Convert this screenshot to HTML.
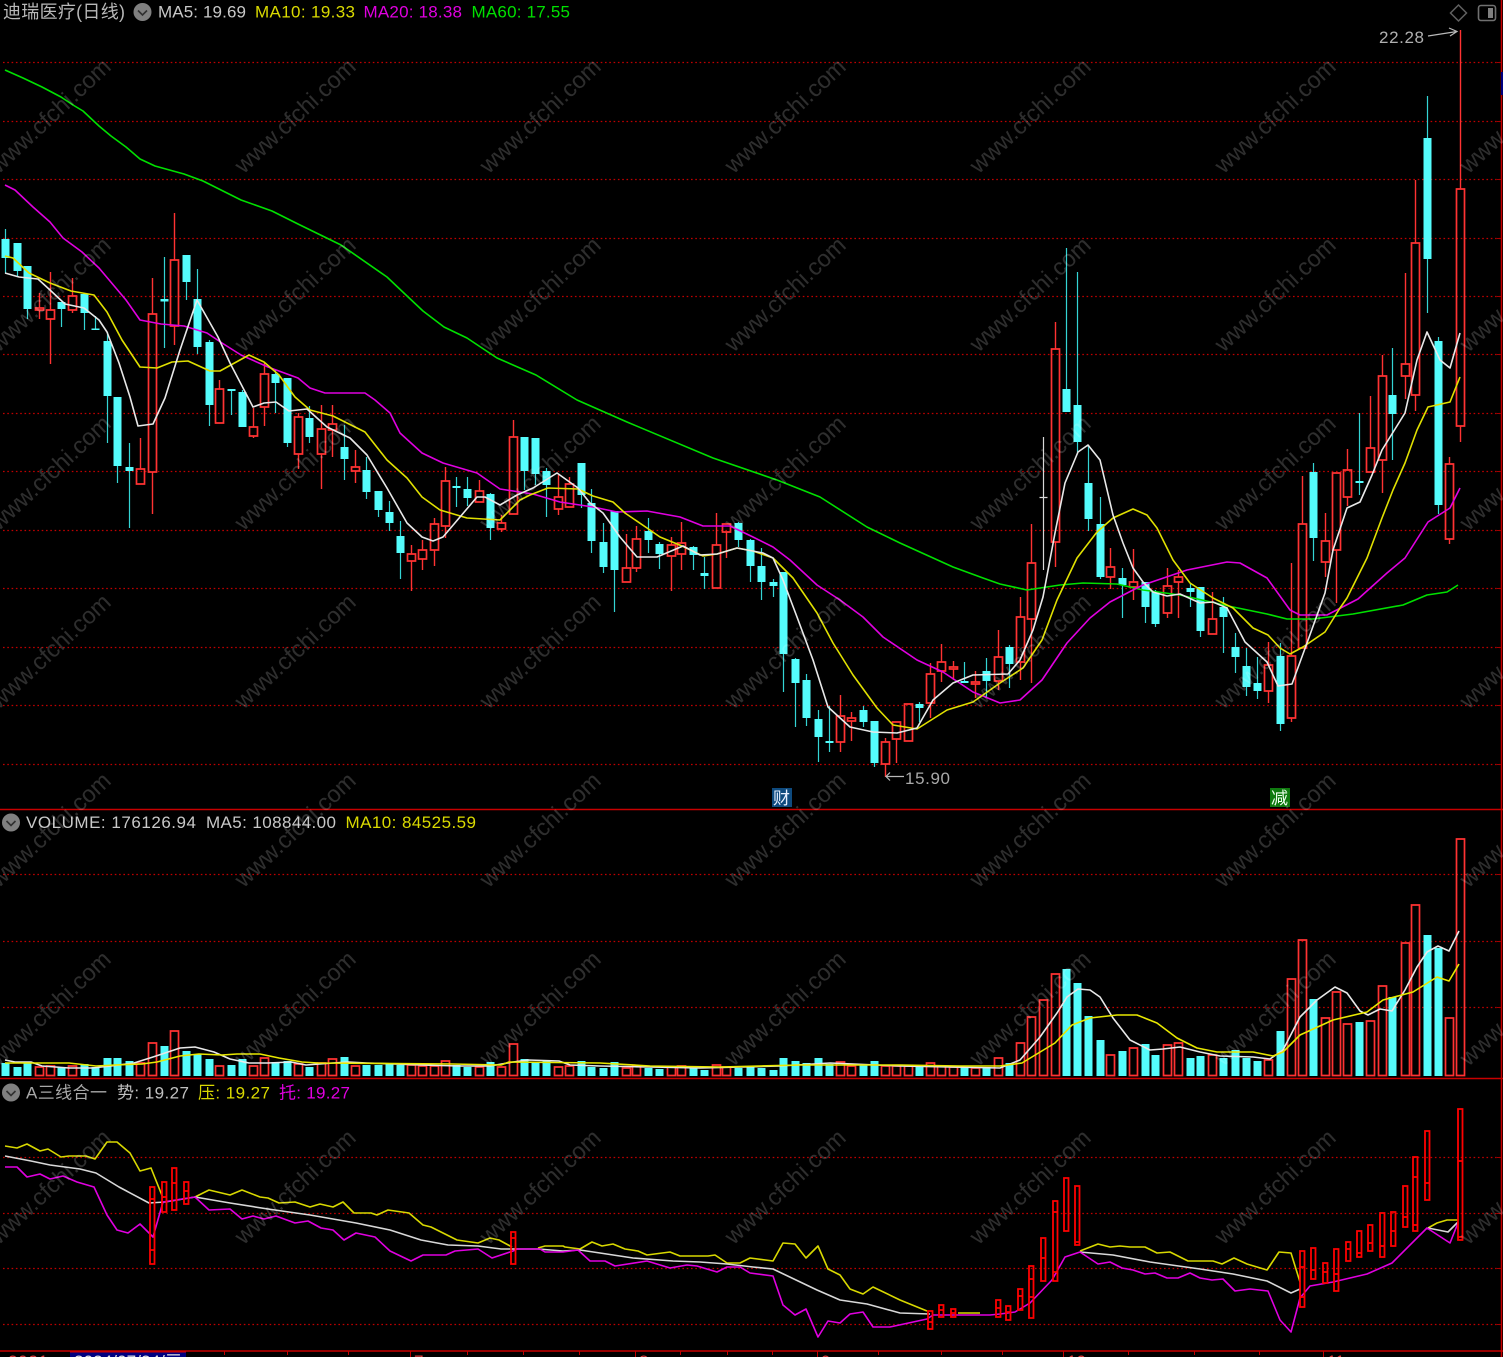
<!DOCTYPE html>
<html><head><meta charset="utf-8"><title>迪瑞医疗</title>
<style>
html,body{margin:0;padding:0;background:#000;width:1503px;height:1357px;overflow:hidden}
svg{display:block;position:absolute;left:0;top:0;filter:blur(.2px)}
text{font-family:"Liberation Sans","Noto Sans CJK SC",sans-serif}
</style></head><body>
<svg xmlns="http://www.w3.org/2000/svg" width="1503" height="1357" viewBox="0 0 1503 1357">
<rect width="1503" height="1357" fill="#000"/>
<!-- grid -->
<path fill="none" stroke="#c00000" stroke-width="1.2" stroke-dasharray="1.6 2.7" d="M3 62.5H1500M3 121.5H1500M3 179.5H1500M3 238.5H1500M3 296.5H1500M3 354.5H1500M3 413.5H1500M3 471.5H1500M3 530.5H1500M3 588.5H1500M3 647.5H1500M3 705.5H1500M3 764.5H1500M3 874.5H1500M3 941.5H1500M3 1007.5H1500M3 1157.5H1500M3 1213.5H1500M3 1268.5H1500M3 1324.5H1500"/>
<!-- frame -->
<path fill="none" stroke="#c80000" stroke-width="1.5" d="M0 809.5H1503M0 1078.5H1503M0 1351H1503M1501.5 0V1357"/>
<path fill="none" stroke="#a00000" stroke-width="1" d="M1497 62.5h4M1497 121.5h4M1497 179.5h4M1497 238.5h4M1497 296.5h4M1497 354.5h4M1497 413.5h4M1497 471.5h4M1497 530.5h4M1497 588.5h4M1497 647.5h4M1497 705.5h4M1497 764.5h4M1497 874.5h4M1497 941.5h4M1497 1007.5h4M1497 1157.5h4M1497 1213.5h4M1497 1268.5h4M1497 1324.5h4"/>
<path fill="none" stroke="#c00000" stroke-width="1" d="M224.5 1351v4M287.5 1351v4M348.5 1351v4M410.5 1351v6M467.5 1351v4M523.5 1351v4M579.5 1351v4M635.5 1351v6M680.5 1351v4M727.5 1351v4M772.5 1351v4M817.5 1351v6M878.5 1351v4M941.5 1351v4M1002.5 1351v4M1063.5 1351v6M1128.5 1351v4M1194.5 1351v4M1259.5 1351v4M1323.5 1351v6"/>
<rect x="1501" y="72" width="2" height="23" fill="#000080"/>
<!-- axis -->
<rect x="70" y="1352" width="116" height="6" fill="#000080"/>
<rect x="70" y="1351.5" width="116" height="1" fill="#d00000"/>
<text x="74" y="1367" font-size="17" fill="#e0e0e0" textLength="108">2024/07/24/三</text>
<text x="8" y="1367" font-size="17" fill="#e04040" textLength="40">2021</text>
<text x="414" y="1367" font-size="17" fill="#e04040">7</text><text x="639" y="1367" font-size="17" fill="#e04040">8</text><text x="821" y="1367" font-size="17" fill="#e04040">9</text><text x="1067" y="1367" font-size="17" fill="#e04040">10</text><text x="1327" y="1367" font-size="17" fill="#e04040">11</text>

<!-- candles cyan wicks -->
<path fill="none" stroke="#34d4d4" stroke-width="1.2" d="M5.5 229V273M17.5 243V277M27.5 266V319M61.5 302V327M84.5 293V330M95.5 316V330M107.5 332V443M117.5 397V483M129.5 443V528M164.5 257V348M186.5 255V300M197.5 269V354M209.5 340V426M231.5 389V415M242.5 390V427M275.5 370V413M287.5 378V447M309.5 406V443M344.5 425V480M366.5 457V499M378.5 491V517M389.5 501V531M400.5 521V579M456.5 477V507M467.5 477V506M490.5 493V540M524.5 437V490M535.5 438V485M546.5 468V517M581.5 463V508M591.5 489V553M603.5 523V573M614.5 511V612M648.5 518V553M659.5 542V569M693.5 546V570M704.5 557V589M738.5 522V547M750.5 539V582M761.5 548V600M773.5 579V597M783.5 572V692M795.5 658V727M806.5 674V726M818.5 710V762M829.5 706V752M863.5 706V727M874.5 721V767M919.5 702V722M964.5 662V683M986.5 658V698M1009.5 645V688M1066.5 248V412M1077.5 272V453M1088.5 445V531M1100.5 497V579M1122.5 568V618M1145.5 582V623M1155.5 590V627M1190.5 583V607M1200.5 587V637M1223.5 597V653M1235.5 633V673M1246.5 648V696M1257.5 657V699M1280.5 643V731M1313.5 463V561M1359.5 413V495M1392.5 348V460M1427.5 96V313M1438.5 337V514"/>
<!-- candles cyan bodies -->
<path fill="none" stroke="#54fcfc" stroke-width="8" d="M5.5 239V258M17.5 243V271M27.5 266V309M61.5 302V309M84.5 294V313M107.5 341V396M117.5 397V466M209.5 342V405M242.5 392V427M275.5 374V383M287.5 378V443M309.5 418V437M344.5 447V459M366.5 470V492M378.5 491V510M389.5 512V523M400.5 536V553M467.5 489V498M490.5 494V528M524.5 437V471M535.5 438V474M546.5 471V485M186.5 255V282M197.5 299V347M581.5 463V495M591.5 503V541M603.5 542V567M614.5 511V570M648.5 531V540M659.5 544V554M693.5 547V555M738.5 523V540M750.5 540V566M761.5 566V582M773.5 582V586M783.5 572V654M795.5 659V683M806.5 680V718M818.5 719V737M863.5 710V722M874.5 721V763M919.5 704V708M986.5 671V681M1009.5 647V664M1066.5 389V412M1077.5 405V442M1088.5 483V519M1100.5 524V577M1122.5 578V585M1145.5 582V607M1155.5 592V624M1190.5 588V592M1200.5 587V631M1223.5 607V617M1235.5 647V657M1246.5 666V687M1257.5 683V691M1280.5 656V724M1313.5 472V538M1392.5 395V414M1427.5 138V259M1438.5 341V505"/>
<path fill="none" stroke="#54fcfc" stroke-width="8" d="M95.5 328.5V330M129.5 467V471M164.5 299V301.5M231.5 389V391M456.5 486V488M704.5 573V576M829.5 741V743M964.5 681V683M1359.5 481V483"/>
<!-- red wicks -->
<path fill="none" stroke="#ff3232" stroke-width="1.4" d="M39.5 293V308M39.5 310V319M50.5 272V310M50.5 319V364M72.5 278V296M72.5 310V313M140.5 438V469M152.5 278V314M152.5 472V514M174.5 213V260M174.5 326V345M219.5 380V389M253.5 408V427M253.5 436V438M264.5 363V374M264.5 407V426M298.5 413V417M298.5 454V469M321.5 405V429M321.5 454V489M332.5 405V424M332.5 430V457M355.5 450V467M355.5 471V483M411.5 545V554M411.5 561V591M422.5 540V550M422.5 559V570M434.5 518V524M434.5 550V566M445.5 467V481M445.5 526V538M479.5 480V491M501.5 515V523M501.5 529V532M513.5 420V437M558.5 475V497M558.5 509V515M569.5 477V484M636.5 526V539M636.5 568V572M626.5 534V568M671.5 537V545M671.5 556V591M681.5 522V543M681.5 554V570M716.5 513V545M726.5 532V558M840.5 695V716M840.5 742V752M851.5 712V718M851.5 721V741M885.5 738V742M885.5 764V777M896.5 739V763M930.5 663V674M930.5 703V718M941.5 644V662M941.5 671V682M953.5 661V667M953.5 669V680M975.5 671V682M975.5 684V698M998.5 630V657M998.5 681V690M1020.5 597V617M1020.5 662V680M1031.5 524V563M1031.5 619V683M1055.5 322V349M1055.5 542V567M1110.5 548V567M1110.5 577V589M1133.5 549V582M1133.5 587V600M1167.5 568V586M1167.5 613V618M1178.5 570V577M1178.5 582V618M1212.5 592V619M1268.5 642V665M1268.5 691V703M1291.5 563V656M1291.5 718V722M1302.5 476V524M1325.5 513V541M1325.5 562V577M1336.5 550V603M1347.5 449V470M1347.5 497V506M1370.5 396V448M1382.5 355V376M1382.5 460V493M1405.5 273V364M1405.5 376V399M1415.5 180V243M1415.5 395V411M1449.5 457V464M1449.5 539V544M1460.5 30V189M1460.5 426V442"/>
<!-- red bodies -->
<path fill="none" stroke="#ff3232" stroke-width="1.7" d="M35.5 308h8V310h-8zM46.5 310h8V319h-8zM68.5 296h8V310h-8zM136.5 469h8V484h-8zM148.5 314h8V472h-8zM170.5 260h8V326h-8zM215.5 389h8V423h-8zM249.5 427h8V436h-8zM260.5 374h8V407h-8zM294.5 417h8V454h-8zM317.5 429h8V454h-8zM328.5 424h8V430h-8zM351.5 467h8V471h-8zM407.5 554h8V561h-8zM418.5 550h8V559h-8zM430.5 524h8V550h-8zM441.5 481h8V526h-8zM475.5 491h8V502h-8zM497.5 523h8V529h-8zM509.5 437h8V514h-8zM554.5 497h8V509h-8zM565.5 484h8V507h-8zM622.5 568h8V582h-8zM632.5 539h8V568h-8zM667.5 545h8V556h-8zM677.5 543h8V554h-8zM712.5 545h8V588h-8zM722.5 524h8V532h-8zM836.5 716h8V742h-8zM847.5 718h8V721h-8zM881.5 742h8V764h-8zM892.5 722h8V739h-8zM904.5 704h8V741h-8zM926.5 674h8V703h-8zM937.5 662h8V671h-8zM949.5 667h8V669h-8zM971.5 682h8V684h-8zM994.5 657h8V681h-8zM1016.5 617h8V662h-8zM1027.5 563h8V619h-8zM1051.5 349h8V542h-8zM1106.5 567h8V577h-8zM1129.5 582h8V587h-8zM1163.5 586h8V613h-8zM1174.5 577h8V582h-8zM1208.5 619h8V634h-8zM1264.5 665h8V691h-8zM1287.5 656h8V718h-8zM1298.5 524h8V648h-8zM1321.5 541h8V562h-8zM1332.5 473h8V550h-8zM1343.5 470h8V497h-8zM1366.5 448h8V472h-8zM1378.5 376h8V460h-8zM1401.5 364h8V376h-8zM1411.5 243h8V395h-8zM1445.5 464h8V539h-8zM1456.5 189h8V426h-8z"/>
<!-- gray doji -->
<path fill="none" stroke="#d8d8d8" stroke-width="1.2" d="M1043.5 437V570M1039.5 497.5h8"/>

<!-- MA lines -->
<g fill="none" stroke-width="1.6" stroke-linejoin="round">
<polyline stroke="#00e000" points="5,70 23,78 42,87 61,97 73,105 83,111 99,126 111,136 126,147 140,159 155,166 184,174 203,181 241,200 272,211 298,224 341,245 387,277 406,295 423,311 444,327 467,338 497,358 536,375 577,400 627,422 713,458 777,480 820,497 867,527 900,543 953,567 983,578 1000,584 1027,590 1060,585 1083,583 1117,584 1143,590 1180,595 1233,607 1267,614 1287,619 1313,619 1353,614 1403,605 1427,595 1447,592 1458,585"/>
<polyline stroke="#e000e0" points="5,185 15,190 33,207 50,222 63,238 82,252 99,268 126,300 140,320 161,324 184,326 207,333 222,343 241,355 268,367 298,378 310,388 325,393 348,393 365,393 375,400 390,413 400,433 422,453 443,463 477,473 500,489 533,494 560,502 593,507 617,512 647,511 680,517 703,526 730,526 753,537 773,547 790,560 817,585 840,600 863,617 883,637 917,660 943,672 973,692 1000,703 1020,700 1042,680 1067,643 1090,618 1110,602 1133,590 1143,585 1187,570 1227,562 1240,563 1267,578 1290,610 1300,615 1327,615 1358,599 1387,573 1405,558 1428,522 1450,508 1460,488"/>
<polyline stroke="#e0e000" points="5,256 13,258 29,273 50,283 71,291 94,295 107,312 122,340 140,367 157,368 172,362 188,361 210,371 220,371 249,355 264,362 279,375 295,397 310,410 333,416 365,432 387,460 407,478 422,497 440,510 467,518 500,520 520,500 530,495 548,488 578,489 593,496 613,502 625,513 647,528 660,537 682,546 703,556 717,554 737,548 753,551 773,558 793,578 817,613 833,643 853,675 877,708 893,725 917,729 947,710 973,702 1000,683 1023,668 1042,640 1057,600 1077,558 1097,532 1113,518 1133,509 1147,515 1157,528 1173,560 1190,583 1213,598 1233,608 1253,628 1268,635 1280,648 1290,654 1303,647 1325,632 1340,608 1347,598 1367,558 1382,518 1393,490 1405,463 1417,430 1428,407 1450,402 1460,377"/>
<polyline stroke="#e8e8e8" points="5,273 19,277 38,279 50,290 65,304 84,308 99,320 107,332 119,363 130,397 138,426 153,424 165,398 180,350 197,300 218,337 230,363 253,407 264,403 276,402 289,411 307,409 327,427 350,438 367,455 387,488 407,523 422,537 433,541 443,537 477,497 485,497 500,505 517,495 533,488 557,473 578,488 590,503 603,513 620,537 637,557 657,557 683,546 700,555 717,554 737,548 763,553 773,558 783,580 797,617 813,660 828,707 850,727 873,732 897,733 917,728 933,700 953,683 973,675 1008,674 1020,660 1033,630 1043,597 1055,533 1065,483 1078,452 1088,445 1100,460 1113,515 1123,543 1133,568 1143,582 1153,592 1167,596 1180,594 1200,603 1213,602 1227,608 1245,642 1267,662 1278,686 1292,684 1307,643 1325,593 1333,550 1347,508 1360,502 1372,475 1382,450 1405,413 1417,360 1427,332 1440,360 1450,368 1460,333"/>
</g>

<!-- badges & labels -->
<rect x="772" y="788" width="20" height="19" fill="#0e4a7e"/>
<text x="773" y="804" font-size="17" fill="#e8f0ff">财</text>
<rect x="1270" y="788" width="20" height="19" fill="#0f7a0f"/>
<text x="1271" y="804" font-size="17" fill="#f0fff0">减</text>
<text x="905" y="784" font-size="17" fill="#a8a8a8" textLength="45">15.90</text>
<path fill="none" stroke="#b8b8b8" stroke-width="1.2" d="M904 776.5H886M890 772.5l-4 4l4 4"/>
<text x="1379" y="43" font-size="17" fill="#b0b0b0" textLength="45">22.28</text>
<path fill="none" stroke="#b8b8b8" stroke-width="1.2" d="M1428 36L1457 31.5M1449 28l8 3.5l-7 4.5"/>

<!-- top right icons -->
<path fill="none" stroke="#606060" stroke-width="1.5" d="M1458.5 5l8 8l-8 8l-8-8z"/>
<rect x="1478.5" y="5.5" width="17" height="15" rx="2.5" fill="none" stroke="#707070" stroke-width="1.6"/>
<rect x="1488" y="8" width="5" height="10" fill="#808080"/>

<!-- volume bars -->
<path fill="none" stroke="#54fcfc" stroke-width="8" d="M5.5 1063V1076M17.5 1067V1076M27.5 1062V1076M61.5 1067V1076M84.5 1064V1076M95.5 1067V1076M107.5 1058V1076M117.5 1058V1076M129.5 1061V1076M164.5 1046V1076M186.5 1051V1076M197.5 1054V1076M209.5 1059V1076M231.5 1065V1076M242.5 1059V1076M275.5 1062V1076M287.5 1061V1076M309.5 1067V1076M344.5 1057V1076M366.5 1065V1076M378.5 1065V1076M389.5 1063V1076M400.5 1065V1076M456.5 1065V1076M467.5 1067V1076M490.5 1062V1076M524.5 1059V1076M535.5 1063V1076M546.5 1060V1076M581.5 1061V1076M591.5 1067V1076M603.5 1068V1076M614.5 1062V1076M648.5 1068V1076M659.5 1069V1076M693.5 1068V1076M704.5 1070V1076M738.5 1068V1076M750.5 1066V1076M761.5 1068V1076M773.5 1070V1076M783.5 1058V1076M795.5 1061V1076M806.5 1063V1076M818.5 1058V1076M829.5 1064V1076M863.5 1065V1076M874.5 1061V1076M919.5 1066V1076M964.5 1068V1076M986.5 1067V1076M1009.5 1063V1076M1066.5 969V1076M1077.5 983V1076M1088.5 1016V1076M1100.5 1040V1076M1122.5 1051V1076M1145.5 1044V1076M1155.5 1055V1076M1190.5 1058V1076M1200.5 1056V1076M1223.5 1058V1076M1235.5 1050V1076M1246.5 1058V1076M1257.5 1061V1076M1280.5 1031V1076M1313.5 999V1076M1359.5 1022V1076M1392.5 997V1076M1427.5 935V1076M1438.5 948V1076"/>
<path fill="none" stroke="#ff3232" stroke-width="1.7" d="M35.5 1067h8V1075.5h-8zM46.5 1066h8V1075.5h-8zM68.5 1066h8V1075.5h-8zM136.5 1063h8V1075.5h-8zM148.5 1043h8V1075.5h-8zM170.5 1031h8V1075.5h-8zM215.5 1066h8V1075.5h-8zM249.5 1066h8V1075.5h-8zM260.5 1058h8V1075.5h-8zM294.5 1064h8V1075.5h-8zM317.5 1063h8V1075.5h-8zM328.5 1059h8V1075.5h-8zM351.5 1066h8V1075.5h-8zM407.5 1065h8V1075.5h-8zM418.5 1066h8V1075.5h-8zM430.5 1066h8V1075.5h-8zM441.5 1061h8V1075.5h-8zM475.5 1067h8V1075.5h-8zM497.5 1067h8V1075.5h-8zM509.5 1044h8V1075.5h-8zM554.5 1067h8V1075.5h-8zM565.5 1066h8V1075.5h-8zM622.5 1068h8V1075.5h-8zM632.5 1066h8V1075.5h-8zM667.5 1067h8V1075.5h-8zM677.5 1066h8V1075.5h-8zM712.5 1065h8V1075.5h-8zM722.5 1067h8V1075.5h-8zM836.5 1062h8V1075.5h-8zM847.5 1066h8V1075.5h-8zM881.5 1066h8V1075.5h-8zM892.5 1066h8V1075.5h-8zM904.5 1066h8V1075.5h-8zM926.5 1063h8V1075.5h-8zM937.5 1066h8V1075.5h-8zM949.5 1067h8V1075.5h-8zM971.5 1068h8V1075.5h-8zM994.5 1058h8V1075.5h-8zM1016.5 1043h8V1075.5h-8zM1027.5 1017h8V1075.5h-8zM1039.5 1000h8V1075.5h-8zM1051.5 974h8V1075.5h-8zM1106.5 1055h8V1075.5h-8zM1129.5 1048h8V1075.5h-8zM1163.5 1045h8V1075.5h-8zM1174.5 1043h8V1075.5h-8zM1208.5 1055h8V1075.5h-8zM1264.5 1060h8V1075.5h-8zM1287.5 979h8V1075.5h-8zM1298.5 940h8V1075.5h-8zM1321.5 1018h8V1075.5h-8zM1332.5 992h8V1075.5h-8zM1343.5 1024h8V1075.5h-8zM1366.5 1021h8V1075.5h-8zM1378.5 986h8V1075.5h-8zM1401.5 943h8V1075.5h-8zM1411.5 905h8V1075.5h-8zM1445.5 1018h8V1075.5h-8zM1456.5 839h8V1075.5h-8z"/>
<g fill="none" stroke-width="1.6" stroke-linejoin="round">
<polyline stroke="#e8e8e8" points="5,1060 15,1062 31,1062 42,1066 69,1068 92,1068 111,1066 134,1063 153,1057 168,1052 180,1048 195,1047 214,1052 230,1059 249,1063 268,1063 291,1062 306,1065 333,1063 348,1062 367,1063 421,1065 459,1066 490,1066 513,1062 528,1060 559,1061 570,1065 600,1066 650,1067 700,1068 780,1066 830,1063 900,1066 950,1067 1000,1068 1020,1060 1040,1037 1057,1013 1067,997 1078,989 1090,990 1100,997 1113,1018 1130,1040 1150,1050 1163,1049 1180,1047 1200,1052 1220,1056 1253,1057 1270,1059 1283,1050 1300,1017 1317,1000 1335,987 1347,993 1360,1011 1368,1015 1380,1009 1392,1011 1405,990 1417,967 1427,952 1438,946 1449,951 1459,931"/>
<polyline stroke="#e8e800" points="5,1063 69,1063 96,1066 115,1065 142,1064 157,1062 180,1056 199,1054 222,1055 237,1054 260,1054 279,1058 302,1062 318,1063 452,1064 501,1065 509,1062 600,1063 650,1066 720,1067 800,1065 900,1065 960,1066 1000,1066 1022,1063 1055,1043 1072,1025 1090,1018 1117,1015 1137,1015 1157,1023 1177,1038 1197,1048 1217,1052 1253,1052 1273,1056 1283,1052 1300,1035 1333,1020 1367,1012 1383,1000 1413,992 1437,977 1449,981 1459,964"/>
</g>

<!-- indicator -->
<g fill="none" stroke-width="1.6" stroke-linejoin="round">
<polyline stroke="#d8d800" points="5,1146 17,1148 27,1144 40,1151 48,1149 61,1157 69,1156 86,1156 95,1159 107,1142 117,1142 130,1153 140,1171 151,1168 163,1198"/>
<polyline stroke="#d8d800" points="195,1197 209,1190 230,1195 242,1190 260,1197 268,1198 279,1203 295,1202 310,1207 320,1204 333,1207 343,1202 354,1213 371,1213 377,1215 388,1210 409,1213 423,1225 431,1227 457,1240 478,1243 490,1238 499,1240 512,1247"/>
<polyline stroke="#d8d800" points="538,1248 545,1246 563,1246 565,1247 580,1249 592,1242 602,1246 613,1244 625,1249 638,1251 647,1255 670,1252 680,1256 708,1256 715,1255 727,1263 740,1263 750,1258 773,1261 783,1243 795,1244 806,1258 818,1246 828,1269 840,1275 850,1289 863,1294 873,1287 900,1300 927,1311"/>
<polyline stroke="#d8d800" points="958,1313 980,1313"/>
<polyline stroke="#d8d800" points="1080,1251 1098,1244 1110,1247 1120,1246 1130,1247 1145,1247 1157,1253 1170,1252 1188,1261 1213,1261 1222,1264 1234,1258 1247,1264 1267,1270 1279,1252 1291,1253 1300,1282"/>
<polyline stroke="#d8d800" points="1428,1228 1437,1223 1447,1220 1458,1220"/>
<polyline stroke="#d8d8d8" points="5,1156 31,1161 50,1165 80,1169 96,1173 119,1187 149,1203 165,1202 195,1197 230,1203 268,1209 310,1215 356,1223 390,1230 421,1240 448,1245 478,1246 501,1249 517,1249 538,1249 563,1251 580,1250 600,1253 633,1258 673,1261 700,1262 727,1264 753,1267 773,1269 817,1290 840,1300 867,1304 900,1313 930,1314"/>
<polyline stroke="#d8d8d8" points="1080,1252 1113,1255 1150,1262 1200,1269 1233,1274 1267,1281 1291,1293 1300,1289"/>
<polyline stroke="#d8d8d8" points="1428,1228 1448,1232 1458,1222"/>
<polyline stroke="#e000e0" points="5,1167 17,1167 27,1177 40,1174 50,1179 63,1176 77,1182 94,1187 107,1215 117,1230 128,1233 140,1224 153,1237 163,1202 195,1197 209,1210 230,1209 242,1219 253,1216 264,1219 276,1216 295,1223 308,1221 321,1228 333,1230 344,1240 356,1233 375,1237 390,1251 411,1261 423,1255 446,1255 455,1251 478,1249 492,1258 513,1251 517,1249 540,1249 545,1252 563,1252 578,1250 590,1261 605,1261 615,1266 647,1261 670,1268 687,1265 697,1266 717,1272 727,1267 740,1267 750,1273 773,1276 783,1305 795,1315 806,1309 818,1337 828,1321 840,1323 850,1314 863,1312 873,1327 890,1327 927,1319 933,1315 960,1315 990,1315 1000,1314 1015,1312 1030,1303 1052,1280 1065,1257 1080,1252 1098,1264 1110,1262 1122,1268 1133,1270 1145,1274 1155,1273 1167,1278 1178,1278 1190,1273 1200,1278 1212,1280 1223,1279 1235,1291 1250,1289 1268,1291 1280,1320 1291,1332 1300,1298 1310,1286 1333,1282 1367,1274 1392,1263 1427,1228 1450,1243 1458,1223"/>
</g>
<path fill="none" stroke="#ff0000" stroke-width="1.8" d="M150 1187h4.5V1264h-4.5zM150 1199h4.5M150 1250h4.5M162 1182h4.5V1212h-4.5zM162 1197h4.5M172 1168h4.5V1210h-4.5zM172 1183h4.5M184 1182h4.5V1204h-4.5zM184 1191h4.5M511 1232h4.5V1264h-4.5zM511 1238h4.5M928 1311h4.5V1329h-4.5zM928 1322h4.5M939 1305h4.5V1317h-4.5zM939 1310h4.5M951 1309h4.5V1317h-4.5zM951 1313h4.5M996 1300h4.5V1317h-4.5zM996 1308h4.5M1006 1306h4.5V1320h-4.5zM1006 1312h4.5M1018 1289h4.5V1310h-4.5zM1018 1296h4.5M1029 1266h4.5V1318h-4.5zM1029 1279h4.5M1029 1297h4.5M1041 1238h4.5V1281h-4.5zM1041 1258h4.5M1053 1201h4.5V1281h-4.5zM1053 1212h4.5M1053 1272h4.5M1064 1178h4.5V1231h-4.5zM1075 1186h4.5V1245h-4.5zM1075 1242h4.5M1300 1251h4.5V1307h-4.5zM1300 1267h4.5M1300 1297h4.5M1311 1248h4.5V1279h-4.5zM1311 1270h4.5M1323 1263h4.5V1283h-4.5zM1323 1272h4.5M1334 1249h4.5V1291h-4.5zM1334 1274h4.5M1346 1242h4.5V1261h-4.5zM1346 1249h4.5M1357 1231h4.5V1257h-4.5zM1357 1253h4.5M1368 1225h4.5V1251h-4.5zM1368 1243h4.5M1380 1213h4.5V1257h-4.5zM1380 1246h4.5M1391 1212h4.5V1246h-4.5zM1391 1231h4.5M1403 1186h4.5V1227h-4.5zM1403 1217h4.5M1413 1157h4.5V1231h-4.5zM1413 1177h4.5M1413 1225h4.5M1425 1131h4.5V1200h-4.5zM1425 1183h4.5M1458 1109h4.5V1240h-4.5zM1458 1161h4.5M1458 1237h4.5"/>

<!-- headers -->
<text x="3" y="18" font-size="18" fill="#b8b8b8" textLength="122">迪瑞医疗(日线)</text>
<circle cx="142.5" cy="12" r="9" fill="#808080"/><path d="M138 10.5l4.5 4.5l4.5-4.5" fill="none" stroke="#303030" stroke-width="1.6"/>
<text x="158" y="17.5" font-size="17" fill="#c8c8c8" textLength="88">MA5: 19.69</text>
<text x="255" y="17.5" font-size="17" fill="#dada00" textLength="100">MA10: 19.33</text>
<text x="363.5" y="17.5" font-size="17" fill="#e000e0" textLength="98.5">MA20: 18.38</text>
<text x="471.5" y="17.5" font-size="17" fill="#00e000" textLength="98.5">MA60: 17.55</text>

<circle cx="11" cy="822.5" r="9" fill="#808080"/><path d="M6.5 821l4.5 4.5l4.5-4.5" fill="none" stroke="#303030" stroke-width="1.6"/>
<text x="26" y="828" font-size="17" fill="#c8c8c8" textLength="170">VOLUME: 176126.94</text>
<text x="206" y="828" font-size="17" fill="#c8c8c8" textLength="130">MA5: 108844.00</text>
<text x="345.5" y="828" font-size="17" fill="#dada00" textLength="130.5">MA10: 84525.59</text>

<circle cx="11" cy="1092.5" r="9" fill="#808080"/><path d="M6.5 1091l4.5 4.5l4.5-4.5" fill="none" stroke="#303030" stroke-width="1.6"/>
<text x="26" y="1098.5" font-size="17" fill="#a8a8a8" textLength="81">A三线合一</text>
<text x="117" y="1098.5" font-size="17" fill="#c0c0c0" textLength="72">势: 19.27</text>
<text x="198" y="1098.5" font-size="17" fill="#dada00" textLength="72">压: 19.27</text>
<text x="279" y="1098.5" font-size="17" fill="#e000e0" textLength="71">托: 19.27</text>

<!-- watermark -->
<g transform="translate(4 4)" font-size="23.5" fill="#fff" fill-opacity=".18" text-anchor="middle">
<text transform="translate(51.5 117.5) rotate(-43)">www.cfchi.com</text><text transform="translate(296.5 117.5) rotate(-43)">www.cfchi.com</text><text transform="translate(541.5 117.5) rotate(-43)">www.cfchi.com</text><text transform="translate(786.5 117.5) rotate(-43)">www.cfchi.com</text><text transform="translate(1031.5 117.5) rotate(-43)">www.cfchi.com</text><text transform="translate(1276.5 117.5) rotate(-43)">www.cfchi.com</text><text transform="translate(1521.5 117.5) rotate(-43)">www.cfchi.com</text>
<text transform="translate(51.5 296) rotate(-43)">www.cfchi.com</text><text transform="translate(296.5 296) rotate(-43)">www.cfchi.com</text><text transform="translate(541.5 296) rotate(-43)">www.cfchi.com</text><text transform="translate(786.5 296) rotate(-43)">www.cfchi.com</text><text transform="translate(1031.5 296) rotate(-43)">www.cfchi.com</text><text transform="translate(1276.5 296) rotate(-43)">www.cfchi.com</text><text transform="translate(1521.5 296) rotate(-43)">www.cfchi.com</text>
<text transform="translate(51.5 474.5) rotate(-43)">www.cfchi.com</text><text transform="translate(296.5 474.5) rotate(-43)">www.cfchi.com</text><text transform="translate(541.5 474.5) rotate(-43)">www.cfchi.com</text><text transform="translate(786.5 474.5) rotate(-43)">www.cfchi.com</text><text transform="translate(1031.5 474.5) rotate(-43)">www.cfchi.com</text><text transform="translate(1276.5 474.5) rotate(-43)">www.cfchi.com</text><text transform="translate(1521.5 474.5) rotate(-43)">www.cfchi.com</text>
<text transform="translate(51.5 653) rotate(-43)">www.cfchi.com</text><text transform="translate(296.5 653) rotate(-43)">www.cfchi.com</text><text transform="translate(541.5 653) rotate(-43)">www.cfchi.com</text><text transform="translate(786.5 653) rotate(-43)">www.cfchi.com</text><text transform="translate(1031.5 653) rotate(-43)">www.cfchi.com</text><text transform="translate(1276.5 653) rotate(-43)">www.cfchi.com</text><text transform="translate(1521.5 653) rotate(-43)">www.cfchi.com</text>
<text transform="translate(51.5 831.5) rotate(-43)">www.cfchi.com</text><text transform="translate(296.5 831.5) rotate(-43)">www.cfchi.com</text><text transform="translate(541.5 831.5) rotate(-43)">www.cfchi.com</text><text transform="translate(786.5 831.5) rotate(-43)">www.cfchi.com</text><text transform="translate(1031.5 831.5) rotate(-43)">www.cfchi.com</text><text transform="translate(1276.5 831.5) rotate(-43)">www.cfchi.com</text><text transform="translate(1521.5 831.5) rotate(-43)">www.cfchi.com</text>
<text transform="translate(51.5 1010) rotate(-43)">www.cfchi.com</text><text transform="translate(296.5 1010) rotate(-43)">www.cfchi.com</text><text transform="translate(541.5 1010) rotate(-43)">www.cfchi.com</text><text transform="translate(786.5 1010) rotate(-43)">www.cfchi.com</text><text transform="translate(1031.5 1010) rotate(-43)">www.cfchi.com</text><text transform="translate(1276.5 1010) rotate(-43)">www.cfchi.com</text><text transform="translate(1521.5 1010) rotate(-43)">www.cfchi.com</text>
<text transform="translate(51.5 1188.5) rotate(-43)">www.cfchi.com</text><text transform="translate(296.5 1188.5) rotate(-43)">www.cfchi.com</text><text transform="translate(541.5 1188.5) rotate(-43)">www.cfchi.com</text><text transform="translate(786.5 1188.5) rotate(-43)">www.cfchi.com</text><text transform="translate(1031.5 1188.5) rotate(-43)">www.cfchi.com</text><text transform="translate(1276.5 1188.5) rotate(-43)">www.cfchi.com</text><text transform="translate(1521.5 1188.5) rotate(-43)">www.cfchi.com</text>
</g>
</svg>
</body></html>
